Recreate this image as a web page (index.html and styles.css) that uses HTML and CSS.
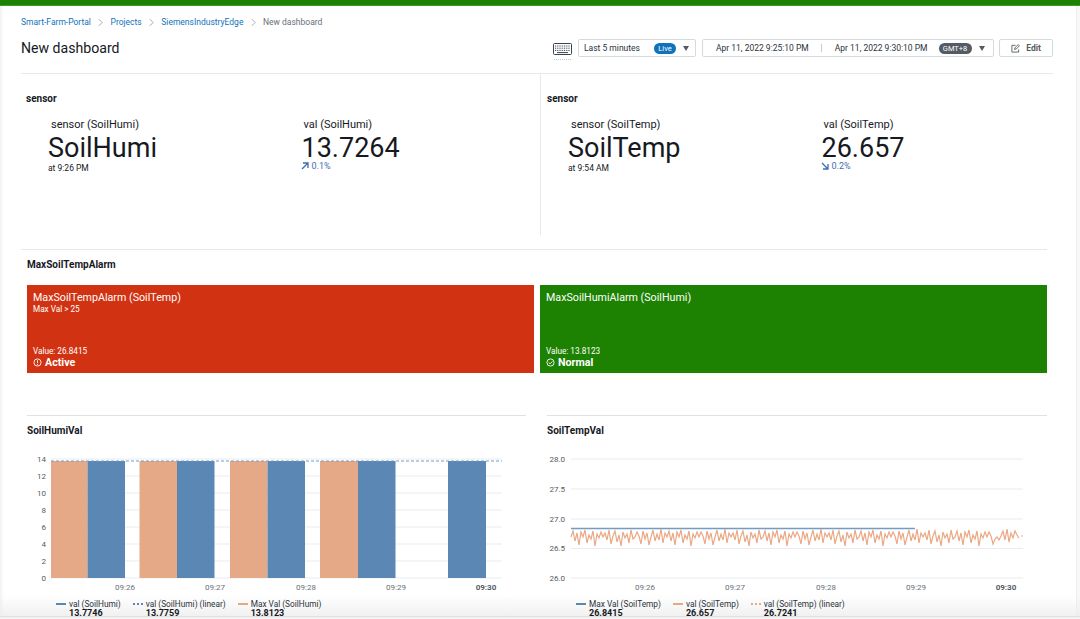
FILE: index.html
```html
<!DOCTYPE html>
<html lang="en">
<head>
<meta charset="utf-8">
<title>New dashboard</title>
<link rel="stylesheet" href="styles.css">
</head>
<body>
<div class="topbar"></div>
<div class="page">
  <nav class="crumbs">
    <a>Smart-Farm-Portal</a><svg class="sep" viewBox="0 0 6 10"><path d="M1 1l4 4-4 4"/></svg>
    <a>Projects</a><svg class="sep" viewBox="0 0 6 10"><path d="M1 1l4 4-4 4"/></svg>
    <a>SiemensIndustryEdge</a><svg class="sep" viewBox="0 0 6 10"><path d="M1 1l4 4-4 4"/></svg>
    <span>New dashboard</span>
  </nav>
  <header class="head">
    <h1>New dashboard</h1>
    <div class="tools">
      <svg class="kbd" viewBox="0 0 19 22"><rect x=".5" y="5.500" width="18" height="11" rx="1" fill="#fff" stroke="#3a4450"/><path d="M2 8h15M2 10.200h15M2 12.400h15" stroke="#3a4450" stroke-dasharray="1 .8"/><path d="M4 14.600h11" stroke="#3a4450"/><path d="M1 21.500h17" stroke="#aab0b6" stroke-width=".7" stroke-dasharray="1 1"/></svg>
      <div class="box range"><span>Last 5 minutes</span><b class="pill live">Live</b><i class="caret"></i></div>
      <div class="box dates"><span>Apr 11, 2022 9:25:10 PM</span><u></u><span>Apr 11, 2022 9:30:10 PM</span><b class="pill gmt">GMT+8</b><i class="caret"></i></div>
      <div class="box edit"><svg viewBox="0 0 10 10"><path d="M8.500 6v3h-7.500v-7.500h4M4 6l.3-1.700 3.700-3.700 1.400 1.400-3.700 3.700z" fill="none" stroke="#545b64"/></svg><span>Edit</span></div>
    </div>
  </header>

  <section class="kpis">
    <article class="kpi-panel">
      <h2>sensor</h2>
      <div class="kpi-row">
        <div class="kpi first"><p class="lab">sensor (SoilHumi)</p><p class="big">SoilHumi</p><p class="sub">at 9:26 PM</p></div>
        <div class="kpi second"><p class="lab">val (SoilHumi)</p><p class="big">13.7264</p><p class="delta"><svg viewBox="0 0 8 8"><path d="M1 7l5.500-5.500M2 1h5v5" fill="none" stroke="#3f6eb0" stroke-width="1.300"/></svg>0.1%</p></div>
      </div>
    </article>
    <article class="kpi-panel divided">
      <h2>sensor</h2>
      <div class="kpi-row">
        <div class="kpi first"><p class="lab">sensor (SoilTemp)</p><p class="big">SoilTemp</p><p class="sub">at 9:54 AM</p></div>
        <div class="kpi second"><p class="lab">val (SoilTemp)</p><p class="big">26.657</p><p class="delta"><svg viewBox="0 0 8 8"><path d="M1 1l5.500 5.500M2 7h5v-5" fill="none" stroke="#3f6eb0" stroke-width="1.300"/></svg>0.2%</p></div>
      </div>
    </article>
  </section>

  <section class="alarms">
    <h2>MaxSoilTempAlarm</h2>
    <div class="alarm-row">
      <div class="alarm red">
        <p class="a-title">MaxSoilTempAlarm (SoilTemp)</p>
        <p class="a-rule">Max Val &gt; 25</p>
        <p class="a-val">Value: 26.8415</p>
        <p class="a-state"><svg viewBox="0 0 10 10"><circle cx="5" cy="5" r="4" fill="none" stroke="#fff"/><path d="M5 2.500v3.200M5 6.800v1" stroke="#fff"/></svg>Active</p>
      </div>
      <div class="alarm green">
        <p class="a-title">MaxSoilHumiAlarm (SoilHumi)</p>
        <p class="a-val">Value: 13.8123</p>
        <p class="a-state"><svg viewBox="0 0 10 10"><circle cx="5" cy="5" r="4" fill="none" stroke="#fff"/><path d="M3 5l1.500 1.500 2.700-2.800" fill="none" stroke="#fff"/></svg>Normal</p>
      </div>
    </div>
  </section>

  <section class="charts">
    <article class="chart">
      <h2>SoilHumiVal</h2>
      <svg class="plot" viewBox="0 0 499 152">
        <g class="grid"><path d="M24 6h451M24 23h451M24 40h451M24 57h451M24 74h451M24 91h451M24 108h451M24 125h451"/></g>
        <g class="ylab"><text x="19" y="9">14</text><text x="19" y="26">12</text><text x="19" y="43">10</text><text x="19" y="60">8</text><text x="19" y="77">6</text><text x="19" y="94">4</text><text x="19" y="111">2</text><text x="19" y="128">0</text></g>
        <g class="org"><rect x="24" y="8" width="36.500" height="117"/><rect x="112.500" y="8" width="37.500" height="117"/><rect x="203" y="8" width="37.500" height="117"/><rect x="293" y="8" width="38" height="117"/></g>
        <g class="blu"><rect x="60.500" y="8" width="37.500" height="117"/><rect x="150" y="8" width="37.500" height="117"/><rect x="240.500" y="8" width="37.500" height="117"/><rect x="331" y="8" width="37.500" height="117"/><rect x="421" y="8" width="38" height="117"/></g>
        <path class="dash" d="M24 8h451"/>
        <g class="xlab"><text x="98" y="137">09:26</text><text x="188" y="137">09:27</text><text x="279" y="137">09:28</text><text x="369" y="137">09:29</text><text class="strong" x="459" y="137">09:30</text></g>
      </svg>
      <ul class="legend">
        <li><i class="solid b"></i><span>val (SoilHumi)<b>13.7746</b></span></li>
        <li><i class="dots b"></i><span>val (SoilHumi) (linear)<b>13.7759</b></span></li>
        <li><i class="solid o"></i><span>Max Val (SoilHumi)<b>13.8123</b></span></li>
      </ul>
    </article>
    <article class="chart">
      <h2>SoilTempVal</h2>
      <svg class="plot" viewBox="0 0 500 152">
        <g class="grid"><path d="M24 6h452M24 36h452M24 66h452M24 95.500h452M24 125h452"/></g>
        <g class="ylab"><text x="18" y="9">28.0</text><text x="18" y="39">27.5</text><text x="18" y="69">27.0</text><text x="18" y="98">26.5</text><text x="18" y="128">26.0</text></g>
        <path class="maxline" d="M24 75.500H368"/>
        <path class="temp" d="M24 84
          l2-6 2 10 2-8 2 12 2-13 2 5 2-7 2 13 2-8 2 4 2-8 2 15 2-12 2 4 2-6 2 5
          l2-4 2 7 2-10 2 14 2-8 2-5 2 11 2-7 2 11 2-14 2 6 2-4 2 9 2-13 2 9 2-2
          l2-5 2 4 2 8 2-13 2 8 2-6 2 12 2-8 2-7 2 11 2-7 2 6 2-11 2 14 2-10 2 4
          l2-6 2 10 2-8 2 12 2-13 2 5 2-7 2 13 2-8 2 4 2-8 2 15 2-12 2 4 2-6 2 5
          l2-5 2 4 2 8 2-13 2 8 2-6 2 12 2-8 2-7 2 11 2-7 2 6 2-11 2 14 2-10 2 4
          l2-4 2 7 2-10 2 14 2-8 2-5 2 11 2-7 2 11 2-14 2 6 2-4 2 9 2-13 2 9 2-2
          l2-6 2 10 2-8 2 12 2-13 2 5 2-7 2 13 2-8 2 4 2-8 2 15 2-12 2 4 2-6 2 5
          l2-5 2 4 2 8 2-13 2 8 2-6 2 12 2-8 2-7 2 11 2-7 2 6 2-11 2 14 2-10 2 4
          l2-4 2 7 2-10 2 14 2-8 2-5 2 11 2-7 2 11 2-14 2 6 2-4 2 9 2-13 2 9 2-2
          l2-6 2 10 2-8 2 12 2-13 2 5 2-7 2 13 2-8 2 4 2-8 2 15 2-12 2 4 2-6 2 5
          l2-5 2 4 2 8 2-13 2 8 2-6 2 12 2-8 2-7 2 11 2-7 2 6 2-11 2 14 2-10 2 4
          l2-4 2 7 2-10 2 14 2-8 2-5 2 11 2-7 2 11 2-14 2 6 2-4 2 9 2-13 2 9 2-2
          l2-6 2 10 2-8 2 12 2-13 2 5 2-7 2 13 2-8 2 4 2-8 2 15 2-12 2 4 2-6 2 5
          l2-5 2 4 2 8 2-5 2-2 2 3 2-4 2-5 2 9 2-11 2 13 2-9 2 5 2-7 2 4 2 3"/>
        <path class="tempdash" d="M474 83h2"/>
        <g class="xlab"><text x="98" y="137">09:26</text><text x="188" y="137">09:27</text><text x="279" y="137">09:28</text><text x="369" y="137">09:29</text><text class="strong" x="459" y="137">09:30</text></g>
      </svg>
      <ul class="legend two">
        <li><i class="solid b"></i><span>Max Val (SoilTemp)<b>26.8415</b></span></li>
        <li><i class="solid o"></i><span>val (SoilTemp)<b>26.657</b></span></li>
        <li><i class="dots o"></i><span>val (SoilTemp) (linear)<b>26.7241</b></span></li>
      </ul>
    </article>
  </section>
</div>
<div class="edge-l"></div><div class="edge-r"></div><div class="edge-b"></div>
</body>
</html>
```

FILE: styles.css
```css
* { box-sizing: border-box; }
html, body { margin: 0; height: 619px; overflow: hidden; background: #fff; }
body { font-family: Roboto, "Noto Sans", sans-serif; color: #16191f; position: relative; }
p, h1, h2, ul { margin: 0; padding: 0; }
.topbar { height: 6px; background: #1d8102; border-bottom: 1px solid #3f9a2d; }
.page { padding: 0 27px 0 21px; position: relative; z-index: 1; }
.crumbs { height: 16px; margin-top: 8px; display: flex; align-items: center; font-size: 8.500px; color: #687078; }
.crumbs a { color: #0f73bb; }
.sep { width: 5px; height: 9px; margin: 0 7.300px; fill: none; stroke: #8a929a; stroke-width: .9; }
.head { display: flex; align-items: center; justify-content: space-between; border-bottom: 1px solid #e6e8ea; padding-bottom: 7px; box-sizing: content-box; height: 36px; }
h1 { font-size: 14.100px; font-weight: 400; }
.tools { display: flex; align-items: center; gap: 6px; font-size: 8.500px; color: #2c333b; white-space: nowrap; }
.kbd { width: 19px; height: 22px; margin-top: 1px; }
.box { height: 18px; border: 1px solid #d5dbdb; border-radius: 2px; display: flex; align-items: center; }
.range { width: 118px; padding-left: 5px; }
.range span { flex: 1; }
.dates { width: 292px; padding-left: 13px; }
.dates u { flex: none; width: 1px; height: 8px; background: #c5cbcb; margin: 0 12.500px; }
.dates span:nth-of-type(2) { margin-right: 11px; }
.pill { font-weight: 400; color: #fff; font-size: 7.500px; border-radius: 7px; height: 11px; line-height: 11px; text-align: center; }
.live { background: #0f73bb; width: 22px; }
.gmt { background: #545b64; width: 33px; }
.caret { width: 0; height: 0; border-left: 3.500px solid transparent; border-right: 3.500px solid transparent; border-top: 5px solid #545b64; margin: 0 6px 0 7px; }
.gmt + .caret { margin-left: 7px; }
.edit { width: 54px; justify-content: center; gap: 6px; color: #545b64; font-weight: 700; margin-left: -1px; }
.edit svg { width: 9px; height: 9px; }

h2 { font-size: 10px; font-weight: 700; color: #16191f; }
.kpis { height: 175px; display: flex; margin-left: 5px; }
.kpi-panel { width: 515px; padding-top: 19px; }
.kpi-panel.divided { border-left: 1px solid #e6e8ea; padding-left: 5px; width: 514px; height: 161px; }
.divided h2 { padding-left: 1px; }
.kpi-row { display: flex; padding-top: 14px; }
.kpi { width: 252.500px; }
.kpi.first, .kpi.second { padding-left: 22px; }
.lab { font-size: 11px; line-height: 13px; padding-left: 3px; }
.big { font-size: 27px; line-height: 28px; margin-top: 3px; color: #16191f; }
.second .big { padding-left: 1px; }
.sub { font-size: 8.500px; line-height: 10px; margin-top: 1px; }
.delta { font-size: 9px; line-height: 10px; margin-top: -1px; color: #3f6eb0; display: flex; align-items: center; gap: 3px; }
.delta svg { width: 8px; height: 8px; }

.alarms { border-top: 1px solid #e6e8ea; padding-top: 8px; margin-right: 6px; height: 166px; }
.alarms h2 { margin-left: 6px; line-height: 13px; }
.alarm-row { display: flex; gap: 6px; margin: 14px 0 0 6px; height: 88px; color: #fff; }
.alarm { flex: 1; padding: 6px 6px 0; display: flex; flex-direction: column; }
.red { background: #d13212; flex: 0 0 507px; }
.green { background: #1d8102; }
.a-title { font-size: 10.700px; line-height: 13px; }
.a-rule { font-size: 8.200px; line-height: 10px; }
.a-val { font-size: 8.200px; line-height: 10px; margin-top: auto; }
.a-state { font-size: 10.700px; font-weight: 700; line-height: 13px; padding-bottom: 4px; display: flex; align-items: center; gap: 3px; }
.a-state svg { width: 9px; height: 9px; }

.charts { display: flex; margin-left: 6px; gap: 21px; }
.chart { width: 499px; border-top: 1px solid #dfe2e4; padding-top: 9px; }
.chart + .chart { width: 500px; }
.chart h2 { line-height: 12px; }
.plot { display: block; width: 100%; height: 152px; margin-top: 16px; }
.grid path { stroke: #e9ebed; fill: none; }
.ylab text { font-size: 8px; text-anchor: end; fill: #545b64; }
.xlab text { font-size: 8px; text-anchor: middle; fill: #687078; }
.xlab .strong { font-weight: 700; fill: #545b64; }
.org rect { fill: #e6a987; }
.blu rect { fill: #5b87b5; }
.dash { stroke: #6f9cc8; stroke-width: 1.200; stroke-dasharray: 3 2; fill: none; }
.maxline { stroke: #6f9cc8; stroke-width: 1.500; fill: none; }
.temp { stroke: #e9a985; stroke-width: 1.200; fill: none; }
.tempdash { stroke: #e9ae8c; fill: none; }
.legend { list-style: none; display: flex; gap: 12px; margin: -5px 0 0 29px; font-size: 8.300px; line-height: 9px; color: #2c333b; }
.legend li { display: flex; gap: 3px; }
.legend b { display: block; font-size: 9px; color: #16191f; }
.legend i { display: block; width: 10px; height: 2px; margin-top: 3px; }
.legend .b { background: #5b87b5; }
.legend .o { background: #e6a987; }
.legend .dots.b { background: repeating-linear-gradient(90deg, #5b87b5 0 2px, transparent 2px 4px); }
.legend .dots.o { background: repeating-linear-gradient(90deg, #e6a987 0 2px, transparent 2px 4px); }
.edge-l, .edge-r, .edge-b { position: absolute; pointer-events: none; }
.edge-l { left: 0; top: 6px; bottom: 0; width: 4px; background: linear-gradient(90deg, #f2f2f2, #fff); }
.edge-r { right: 0; top: 6px; bottom: 0; width: 4px; background: #f8f8f8; border-left: 1px solid #efefef; }
.edge-b { left: 0; right: 0; bottom: 0; height: 24px; background: linear-gradient(180deg, rgba(240,240,240,0), rgba(236,236,236,.75) 88%, #dcdcdc 90%, #f4f4f4 94%); }
```
